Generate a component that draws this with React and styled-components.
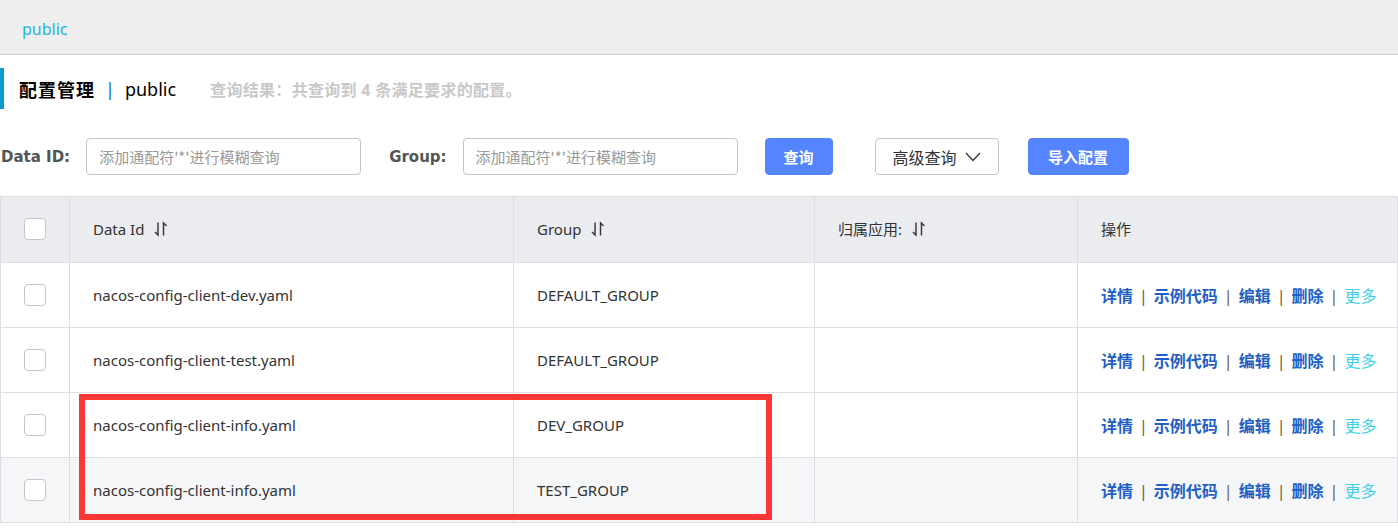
import styled, { createGlobalStyle } from "styled-components";

const GlobalStyle = createGlobalStyle`
  body {
    margin: 0;
    background: #fff;
    font-family: "Noto Sans", "Noto Sans CJK SC", sans-serif;
    color: #333;
  }
`;

const TopBar = styled.div`
  height: 55px;
  background: #eeeeee;
  border-bottom: 1px solid #cccccc;
  display: flex;
  align-items: center;
  padding: 3px 0 0 22px;
  box-sizing: border-box;
  font-size: 16px;
  color: #1fb3e0;
`;

const TitleRow = styled.div`
  margin-top: 13px;
  height: 41px;
  border-left: 4px solid #0b9bd1;
  display: flex;
  align-items: center;
  padding-left: 15px;
`;

const Title = styled.h2`
  margin: 0;
  font-size: 18px;
  font-weight: 700;
  letter-spacing: 1px;
  color: #000;
`;

const Divider = styled.span`
  margin: 0 10px 0 10px;
  color: #0a73b8;
  font-size: 18px;
`;

const Namespace = styled.span`
  font-size: 18px;
  color: #000;
`;

const ResultText = styled.span`
  margin-left: 34px;
  font-size: 16px;
  font-weight: 700;
  color: #c8c8c8;
  letter-spacing: 0.3px;
`;

const SearchRow = styled.div`
  margin-top: 29px;
  display: flex;
  align-items: center;
  height: 37px;
`;

const Label = styled.label`
  font-family: "DejaVu Sans", sans-serif;
  font-weight: 700;
  font-size: 15px;
  color: #555;
  margin-left: ${(p) => p.$ml || 0}px;
  margin-right: 16px;
  padding-left: ${(p) => p.$pl || 0}px;
`;

const Input = styled.input`
  box-sizing: border-box;
  width: 275px;
  height: 37px;
  border: 1px solid #c4c6cf;
  border-radius: 4px;
  padding: 0 12px;
  font-family: "Noto Sans CJK SC", sans-serif;
  font-size: 15px;
  outline: none;
  &::placeholder {
    color: #999;
  }
`;

const Button = styled.button`
  box-sizing: border-box;
  height: 37px;
  width: ${(p) => p.$w}px;
  margin-left: ${(p) => p.$ml}px;
  padding: 0;
  border-radius: 4px;
  font-family: "Noto Sans", "Noto Sans CJK SC", sans-serif;
  font-size: ${(p) => (p.$primary ? 15 : 16)}px;
  font-weight: ${(p) => (p.$primary ? 700 : 400)};
  background: ${(p) => (p.$primary ? "#5584ff" : "#fff")};
  color: ${(p) => (p.$primary ? "#fff" : "#333")};
  border: 1px solid ${(p) => (p.$primary ? "#5584ff" : "#c4c6cf")};
  display: flex;
  align-items: center;
  justify-content: center;
  gap: 8px;
  cursor: pointer;
`;

const TableWrap = styled.div`
  position: relative;
  margin-top: 21px;
`;

const Table = styled.table`
  width: 1398px;
  border-collapse: collapse;
  table-layout: fixed;
  font-size: 15px;
`;

const Th = styled.th`
  height: 63px;
  background: #ebecf0;
  border: 1px solid #dcdee3;
  text-align: left;
  font-weight: 400;
  color: #333;
  padding: 0 0 2px 23px;
`;

const Tr = styled.tr`
  background: ${(p) => (p.$hover ? "#f5f6f8" : "#fff")};
`;

const Td = styled.td`
  height: 64px;
  border: 1px solid #dcdee3;
  padding: 0 0 0 23px;
  color: #333;
`;

const HeadCell = styled.div`
  display: flex;
  align-items: center;
  gap: 10px;
`;

const Check = styled.span`
  display: block;
  box-sizing: border-box;
  width: 22px;
  height: 22px;
  border: 1px solid #c4c6cf;
  border-radius: 4px;
  background: #fff;
`;

const Actions = styled.div`
  display: flex;
  align-items: center;
  font-size: 16px;
`;

const Action = styled.a`
  color: ${(p) => (p.$more ? "#3dd0e6" : "#1f5fc6")};
  font-weight: ${(p) => (p.$more ? 400 : 700)};
  text-decoration: none;
  cursor: pointer;
`;

const Sep = styled.span`
  color: #6a5a3a;
  margin: 0 6px;
`;

const Highlight = styled.div`
  position: absolute;
  left: 79px;
  top: 198px;
  width: 693px;
  height: 126px;
  box-sizing: border-box;
  border: 6px solid #fd3636;
  pointer-events: none;
`;

const SortIcon = () => (
  <svg width="14" height="16" viewBox="0 0 14 16" fill="none" stroke="#333" strokeWidth="1.4">
    <path d="M4 1.5V14L1 11" />
    <path d="M9.5 14.5V2L12.5 5" />
  </svg>
);

const rows = [
  { id: "nacos-config-client-dev.yaml", group: "DEFAULT_GROUP" },
  { id: "nacos-config-client-test.yaml", group: "DEFAULT_GROUP" },
  { id: "nacos-config-client-info.yaml", group: "DEV_GROUP" },
  { id: "nacos-config-client-info.yaml", group: "TEST_GROUP", hover: true },
];

const ops = ["详情", "示例代码", "编辑", "删除"];

export default function App() {
  return (
    <>
      <GlobalStyle />
      <TopBar>public</TopBar>
      <TitleRow>
        <Title>配置管理</Title>
        <Divider>|</Divider>
        <Namespace>public</Namespace>
        <ResultText>查询结果：共查询到 4 条满足要求的配置。</ResultText>
      </TitleRow>
      <SearchRow>
        <Label $pl={1}>Data ID:</Label>
        <Input placeholder="添加通配符'*'进行模糊查询" />
        <Label $ml={28}>Group:</Label>
        <Input placeholder="添加通配符'*'进行模糊查询" />
        <Button $primary $ml={27} $w={68}>查询</Button>
        <Button $ml={42} $w={124}>
          高级查询
          <svg width="16" height="10" viewBox="0 0 16 10" fill="none" stroke="#333" strokeWidth="1.3">
            <path d="M1 1l7 7.5L15 1" />
          </svg>
        </Button>
        <Button $primary $ml={29} $w={101}>导入配置</Button>
      </SearchRow>
      <TableWrap>
        <Table>
          <colgroup>
            <col style={{ width: 69 }} />
            <col style={{ width: 444 }} />
            <col style={{ width: 301 }} />
            <col style={{ width: 263 }} />
            <col />
          </colgroup>
          <thead>
            <tr>
              <Th><Check /></Th>
              <Th><HeadCell>Data Id <SortIcon /></HeadCell></Th>
              <Th><HeadCell>Group <SortIcon /></HeadCell></Th>
              <Th><HeadCell>归属应用: <SortIcon /></HeadCell></Th>
              <Th>操作</Th>
            </tr>
          </thead>
          <tbody>
            {rows.map((r, i) => (
              <Tr key={i} $hover={r.hover}>
                <Td><Check /></Td>
                <Td>{r.id}</Td>
                <Td>{r.group}</Td>
                <Td />
                <Td>
                  <Actions>
                    {ops.map((o) => (
                      <span key={o}>
                        <Action>{o}</Action>
                        <Sep>|</Sep>
                      </span>
                    ))}
                    <Action $more>更多</Action>
                  </Actions>
                </Td>
              </Tr>
            ))}
          </tbody>
        </Table>
        <Highlight />
      </TableWrap>
    </>
  );
}
